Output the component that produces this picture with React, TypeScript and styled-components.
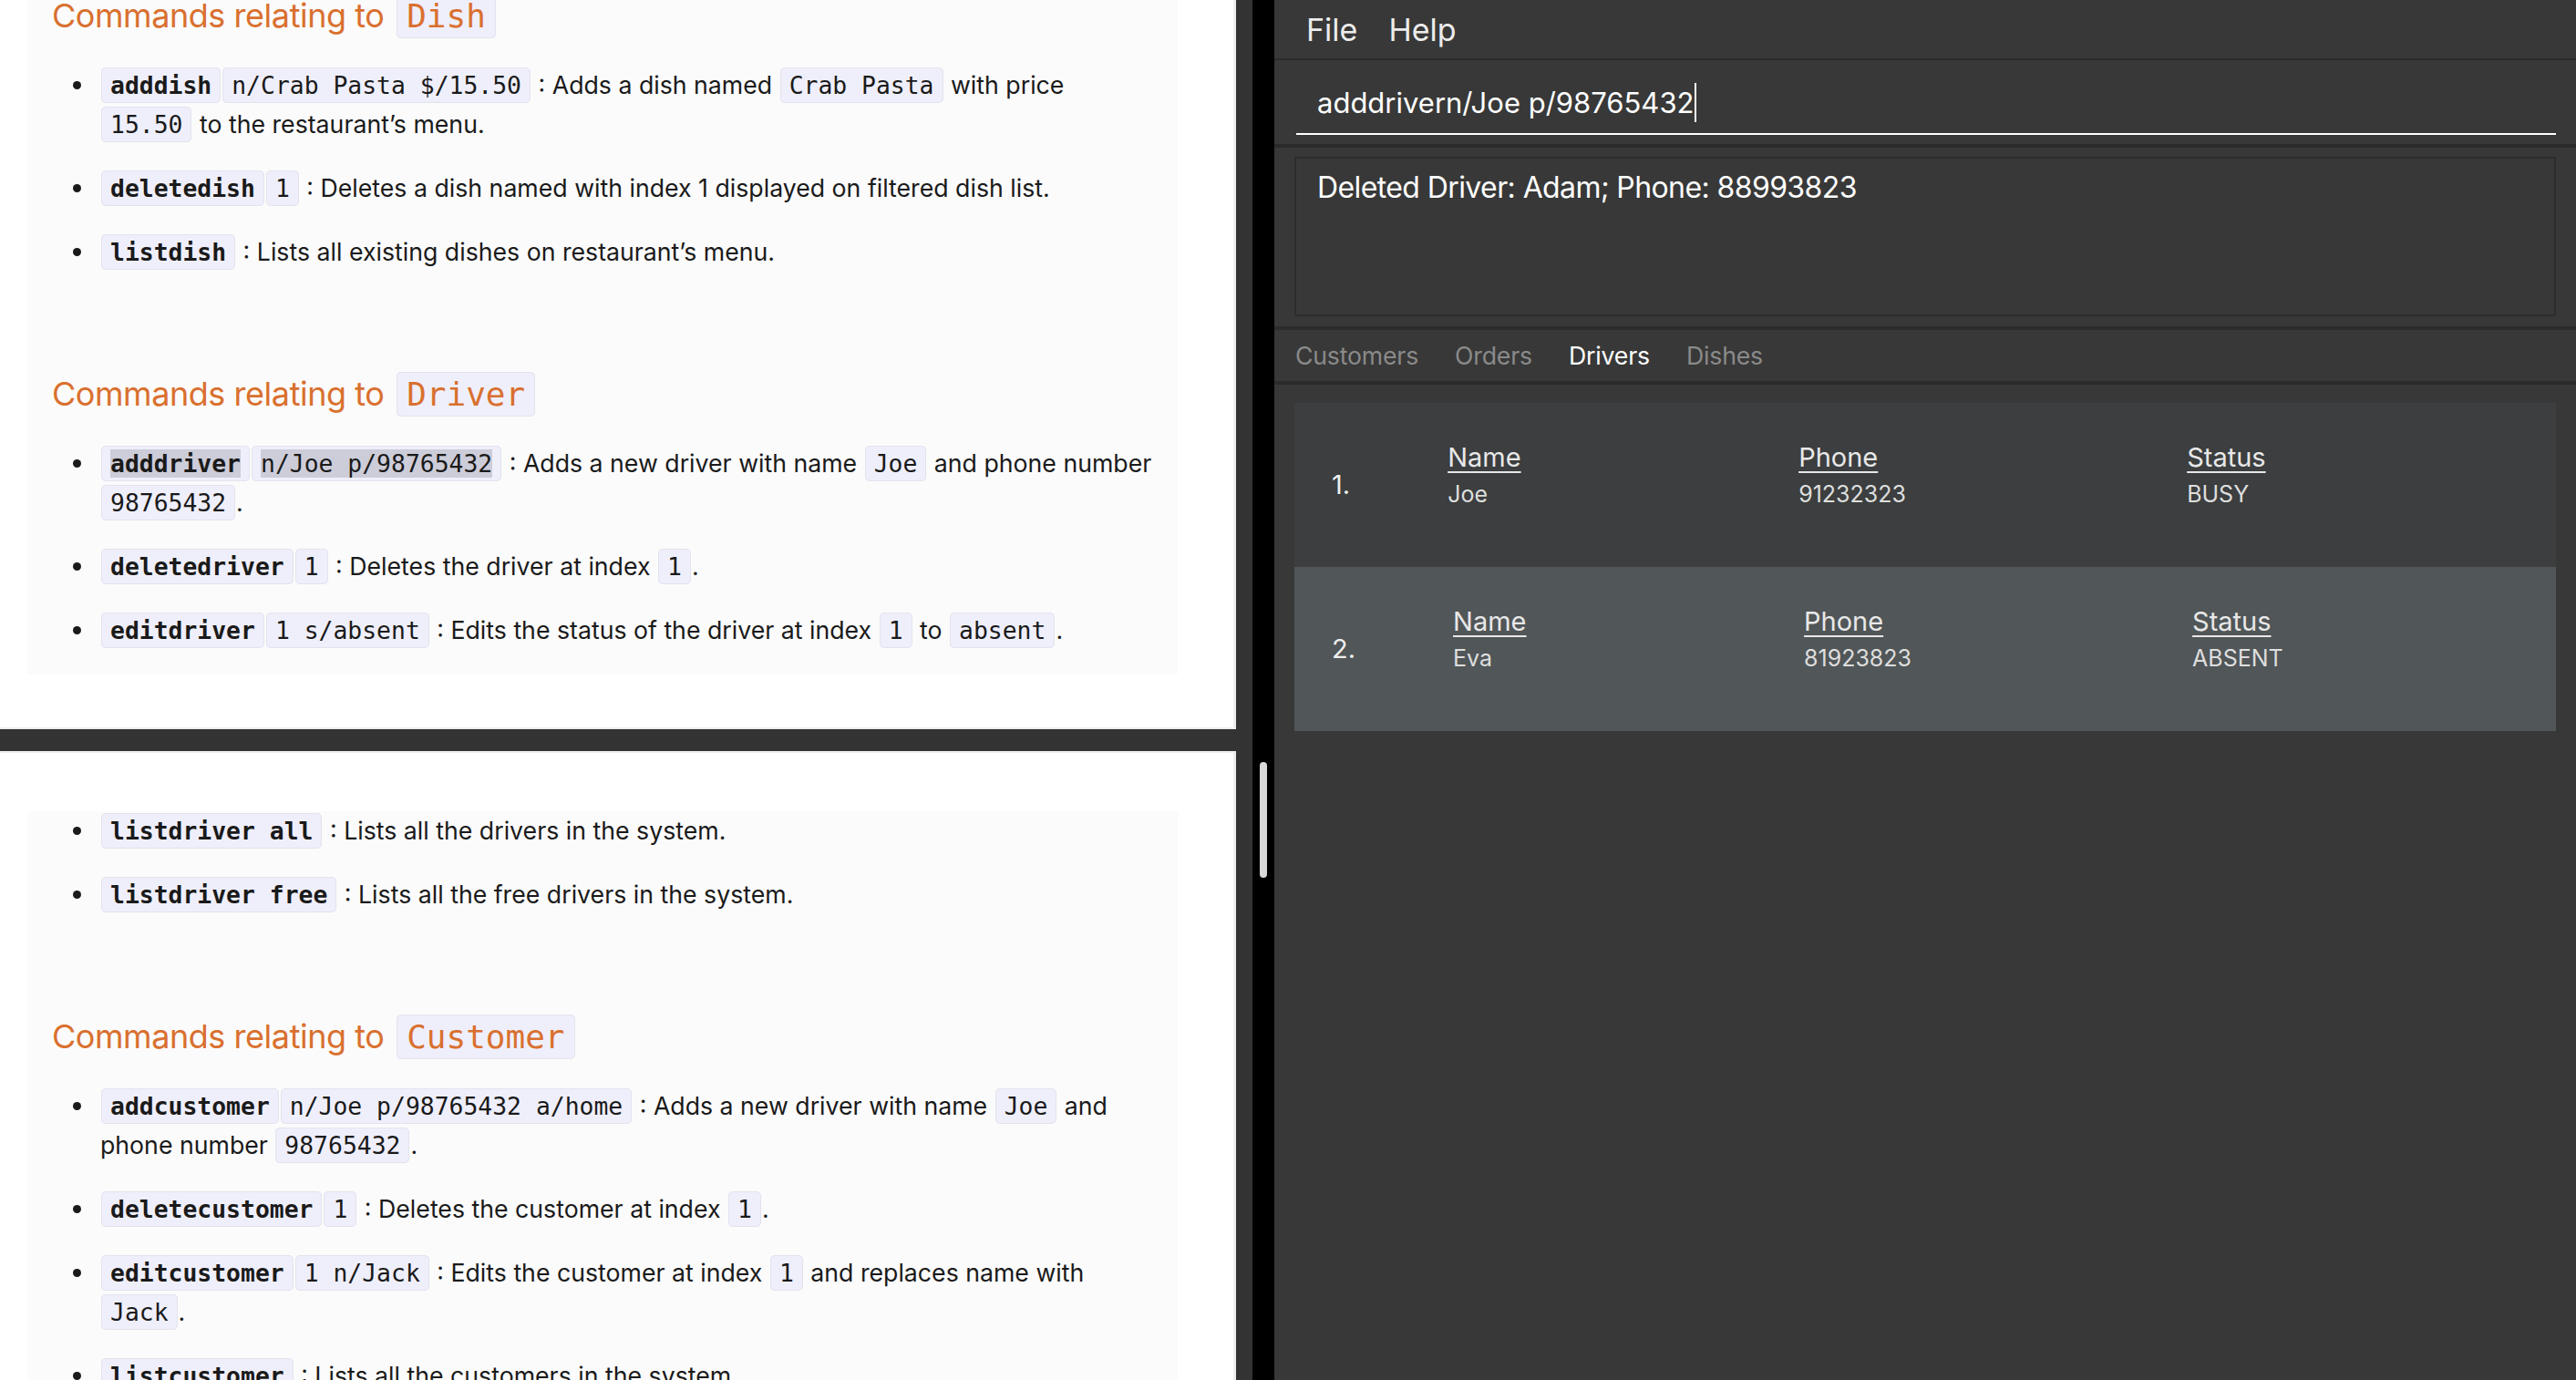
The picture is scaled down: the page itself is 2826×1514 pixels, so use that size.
import React from "react";
import styled, { createGlobalStyle } from "styled-components";

const Global = createGlobalStyle`
  html, body { margin: 0; padding: 0; background: #333333; }
  body { width: 2826px; height: 1514px; overflow: hidden; }
  * { box-sizing: border-box; }
`;

const Screen = styled.div`
  display: flex;
  width: 2826px;
  height: 1514px;
`;

/* ---------- left: documentation window ---------- */

const DocColumn = styled.div`
  width: 1374px;
  flex: none;
  display: flex;
  flex-direction: column;
  gap: 24px;
  background: #333333;
`;

const DocPane = styled.div<{ $h: number; $edge: "top" | "bottom" }>`
  width: 1356px;
  height: ${(p) => p.$h}px;
  flex: none;
  background: #ffffff;
  overflow: hidden;
  box-shadow: inset -3px 0 0 #eeeeee,
    inset 0 ${(p) => (p.$edge === "top" ? "-2px" : "2px")} 0 #eeeeee;
  font-family: Inter, "Liberation Sans", sans-serif;
  color: #1a1a1a;
`;

const Article = styled.div<{ $offset: number }>`
  display: flow-root;
  margin: ${(p) => p.$offset}px 0 0 30px;
  width: 1262px;
  background: #fbfbfb;
`;

const Heading = styled.h2<{ $first?: boolean }>`
  margin: ${(p) => (p.$first ? "0" : "109px")} 0 30px;
  padding-left: 27px;
  font-size: 36px;
  font-weight: 400;
  line-height: 50px;
  height: 50px;
  letter-spacing: -0.45px;
  color: #d9702f;
  white-space: nowrap;
`;

const HeadCode = styled.code`
  font-family: "DejaVu Sans Mono", monospace;
  font-size: 36px;
  line-height: 1;
  letter-spacing: 0;
  background: #efeffb;
  border: 1px solid #e3e3ee;
  border-radius: 5px;
  padding: 3px 10px;
  margin-left: 4px;
  color: inherit;
`;

const List = styled.ul`
  margin: 0;
  padding: 0 0 0 50px;
  list-style: none;
  font-size: 26.7px;
  line-height: 43px;
`;

const Item = styled.li`
  display: flex;
  margin-bottom: 27px;
  white-space: nowrap;
`;

const Bullet = styled.span`
  flex: none;
  width: 30px;
  height: 43px;
  display: flex;
  align-items: center;
  &::before {
    content: "";
    width: 9px;
    height: 9px;
    border-radius: 50%;
    background: #1a1a1a;
  }
`;

const Body = styled.div``;

const Code = styled.code<{ $bold?: boolean }>`
  font-family: "DejaVu Sans Mono", monospace;
  font-size: 26.4px;
  line-height: 1;
  font-weight: ${(p) => (p.$bold ? 700 : 400)};
  background: #efeffb;
  border: 1px solid #e3e3ee;
  border-radius: 5px;
  padding: 3px 9px;
  margin: 0 1px;
  color: #1a1a1a;
`;

const Sel = styled.span`
  background: #cdcdd9;
`;

/* ---------- scroll track ---------- */

const ScrollTrack = styled.div`
  width: 24px;
  flex: none;
  background: #000000;
  padding: 836px 0 0 8px;
`;

const Thumb = styled.div`
  width: 8px;
  height: 127px;
  border-radius: 4px;
  background: #d9d9d9;
`;

/* ---------- right: JavaFX app ---------- */

const AppWindow = styled.div`
  flex: 1;
  display: flex;
  flex-direction: column;
  background: #383838;
  font-family: Inter, "Liberation Sans", sans-serif;
  color: #ffffff;
`;

const MenuBar = styled.div`
  height: 66px;
  flex: none;
  display: flex;
  align-items: center;
  gap: 34px;
  padding-left: 35px;
  border-bottom: 2px solid #2b2b2b;
  font-size: 34px;
  color: #ececec;
`;

const CommandPane = styled.div`
  height: 96px;
  flex: none;
  padding: 20px 22px 10px 24px;
  border-bottom: 4px solid #2b2b2b;
`;

const CommandField = styled.div`
  height: 62px;
  display: flex;
  align-items: center;
  padding: 0 0 8px 23px;
  border-bottom: 2px solid #ffffff;
  font-size: 31px;
`;

const Caret = styled.span`
  width: 2px;
  height: 43px;
  background: #ffffff;
  margin-left: 1px;
`;

const ResultPane = styled.div`
  height: 200px;
  flex: none;
  padding: 10px 22px 11px 22px;
  border-bottom: 4px solid #2b2b2b;
`;

const ResultBox = styled.div`
  height: 175px;
  border: 2px solid #2c2c2c;
  padding: 12px 23px;
  font-size: 32px;
  letter-spacing: -0.6px;
  line-height: 1.25;
`;

const TabBar = styled.div`
  height: 60px;
  flex: none;
  display: flex;
  align-items: center;
  gap: 40px;
  padding-left: 23px;
  border-bottom: 4px solid #2b2b2b;
  font-size: 26.7px;
  letter-spacing: -0.2px;
`;

const Tab = styled.span<{ $active?: boolean }>`
  color: ${(p) => (p.$active ? "#ffffff" : "#8a8a8a")};
`;

const ListArea = styled.div`
  flex: 1;
  padding: 20px 22px 0 22px;
`;

const Card = styled.div<{ $odd?: boolean }>`
  height: 180px;
  display: flex;
  align-items: center;
  padding-left: 41px;
  background: ${(p) => (p.$odd ? "#515658" : "#3c3e3f")};
`;

const Index = styled.span`
  font-size: 29px;
  line-height: 34px;
  color: #eeeeee;
  margin-right: 107px;
`;

const Fields = styled.div`
  align-self: flex-start;
  margin-top: 43px;
  display: grid;
  grid-template-columns: 385px 426px auto;
`;

const Field = styled.div`
  display: flex;
  flex-direction: column;
  gap: 8px;
`;

const FieldLabel = styled.span`
  font-size: 29px;
  line-height: 34px;
  color: #e8e8e8;
  text-decoration: underline;
  text-underline-offset: 5px;
  text-decoration-thickness: 2px;
`;

const FieldValue = styled.span`
  font-size: 25px;
  line-height: 30px;
  color: #dedede;
`;

type Driver = { name: string; phone: string; status: string };

const drivers: Driver[] = [
  { name: "Joe", phone: "91232323", status: "BUSY" },
  { name: "Eva", phone: "81923823", status: "ABSENT" },
];

function DriverCard({ d, i }: { d: Driver; i: number }) {
  return (
    <Card $odd={i % 2 === 1}>
      <Index>{i + 1}.</Index>
      <Fields>
        <Field>
          <FieldLabel>Name</FieldLabel>
          <FieldValue>{d.name}</FieldValue>
        </Field>
        <Field>
          <FieldLabel>Phone</FieldLabel>
          <FieldValue>{d.phone}</FieldValue>
        </Field>
        <Field>
          <FieldLabel>Status</FieldLabel>
          <FieldValue>{d.status}</FieldValue>
        </Field>
      </Fields>
    </Card>
  );
}

function Li({ children }: { children: React.ReactNode }) {
  return (
    <Item>
      <Bullet />
      <Body>{children}</Body>
    </Item>
  );
}

export default function App() {
  return (
    <>
      <Global />
      <Screen>
        <DocColumn>
          <DocPane $h={800} $edge="top">
            <Article $offset={-8}>
              <Heading $first>
                Commands relating to <HeadCode>Dish</HeadCode>
              </Heading>
              <List>
                <Li>
                  <Code $bold>adddish</Code>
                  <Code>n/Crab Pasta $/15.50</Code> : Adds a dish named{" "}
                  <Code>Crab Pasta</Code> with price
                  <br />
                  <Code>15.50</Code> to the restaurant’s menu.
                </Li>
                <Li>
                  <Code $bold>deletedish</Code>
                  <Code>1</Code> : Deletes a dish named with index 1 displayed on
                  filtered dish list.
                </Li>
                <Li>
                  <Code $bold>listdish</Code> : Lists all existing dishes on
                  restaurant’s menu.
                </Li>
              </List>
              <Heading>
                Commands relating to <HeadCode>Driver</HeadCode>
              </Heading>
              <List>
                <Li>
                  <Code $bold>
                    <Sel>adddriver</Sel>
                  </Code>
                  <Code>
                    <Sel>n/Joe p/98765432</Sel>
                  </Code>{" "}
                  : Adds a new driver with name <Code>Joe</Code> and phone number
                  <br />
                  <Code>98765432</Code>.
                </Li>
                <Li>
                  <Code $bold>deletedriver</Code>
                  <Code>1</Code> : Deletes the driver at index <Code>1</Code>.
                </Li>
                <Li>
                  <Code $bold>editdriver</Code>
                  <Code>1 s/absent</Code> : Edits the status of the driver at
                  index <Code>1</Code> to <Code>absent</Code>.
                </Li>
              </List>
            </Article>
          </DocPane>
          <DocPane $h={690} $edge="bottom">
            <Article $offset={66}>
              <List>
                <Li>
                  <Code $bold>listdriver all</Code> : Lists all the drivers in
                  the system.
                </Li>
                <Li>
                  <Code $bold>listdriver free</Code> : Lists all the free drivers
                  in the system.
                </Li>
              </List>
              <Heading>
                Commands relating to <HeadCode>Customer</HeadCode>
              </Heading>
              <List>
                <Li>
                  <Code $bold>addcustomer</Code>
                  <Code>n/Joe p/98765432 a/home</Code> : Adds a new driver with
                  name <Code>Joe</Code> and
                  <br />
                  phone number <Code>98765432</Code>.
                </Li>
                <Li>
                  <Code $bold>deletecustomer</Code>
                  <Code>1</Code> : Deletes the customer at index <Code>1</Code>.
                </Li>
                <Li>
                  <Code $bold>editcustomer</Code>
                  <Code>1 n/Jack</Code> : Edits the customer at index{" "}
                  <Code>1</Code> and replaces name with
                  <br />
                  <Code>Jack</Code>.
                </Li>
                <Li>
                  <Code $bold>listcustomer</Code> : Lists all the customers in
                  the system.
                </Li>
              </List>
            </Article>
          </DocPane>
        </DocColumn>
        <ScrollTrack>
          <Thumb />
        </ScrollTrack>
        <AppWindow>
          <MenuBar>
            <span>File</span>
            <span>Help</span>
          </MenuBar>
          <CommandPane>
            <CommandField>
              <span>adddrivern/Joe p/98765432</span>
              <Caret />
            </CommandField>
          </CommandPane>
          <ResultPane>
            <ResultBox>Deleted Driver: Adam; Phone: 88993823</ResultBox>
          </ResultPane>
          <TabBar>
            <Tab>Customers</Tab>
            <Tab>Orders</Tab>
            <Tab $active>Drivers</Tab>
            <Tab>Dishes</Tab>
          </TabBar>
          <ListArea>
            {drivers.map((d, i) => (
              <DriverCard key={d.name} d={d} i={i} />
            ))}
          </ListArea>
        </AppWindow>
      </Screen>
    </>
  );
}
